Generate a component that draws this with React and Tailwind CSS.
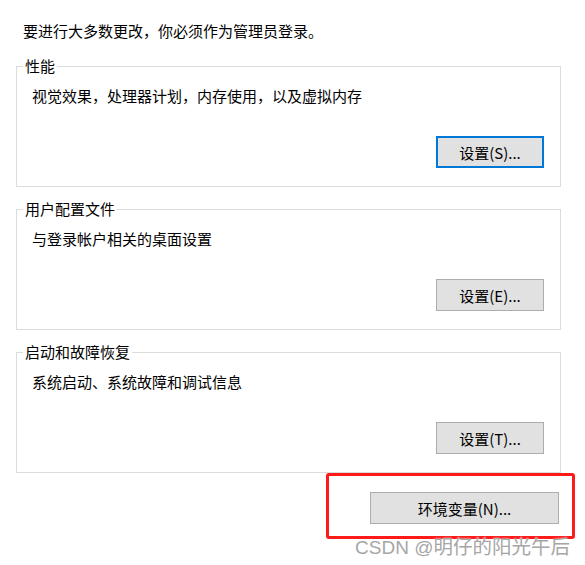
const groups = [
  { title: '性能', desc: '视觉效果，处理器计划，内存使用，以及虚拟内存', btn: '设置(S)...', focused: true },
  { title: '用户配置文件', desc: '与登录帐户相关的桌面设置', btn: '设置(E)...' },
  { title: '启动和故障恢复', desc: '系统启动、系统故障和调试信息', btn: '设置(T)...' },
]

function GroupBox({ title, desc, btn, focused }) {
  return (
    <fieldset className="border border-[#dcdcdc] px-0">
      <legend className="ml-[6px] px-[2px] leading-[20px]">{title}</legend>
      <div className="pl-[15px] pr-[16px] pb-[18px]">
        <p className="mt-[10px] leading-[20px]">{desc}</p>
        <div className="flex justify-end mt-[30px]">
          <button
            className={`w-[108px] h-[32px] bg-[#e1e1e1] leading-none ${
              focused ? 'border-2 border-[#0078d7]' : 'border border-[#adadad]'
            }`}
          >
            {btn}
          </button>
        </div>
      </div>
    </fieldset>
  )
}

export default function App() {
  return (
    <div
      className="relative w-[585px] h-[565px] bg-white text-[15px] text-black overflow-hidden"
      style={{ fontFamily: '"Noto Sans CJK SC", "Noto Sans", sans-serif' }}
    >
      <div className="pt-[21px] pl-[23px] leading-[20px]">要进行大多数更改，你必须作为管理员登录。</div>

      <div className="mt-[15px] ml-[16px] w-[545px] flex flex-col gap-[12px]">
        {groups.map(g => (
          <GroupBox key={g.title} {...g} />
        ))}
      </div>

      {/* red annotation box */}
      <div className="ml-[326px] w-[249px] h-[66px] border-[3px] border-[#ff1a1a] rounded-[3px] flex items-start pt-[16px] pl-[41px]">
        <button className="w-[189px] h-[32px] bg-[#e1e1e1] border border-[#adadad] leading-none">
          环境变量(N)...
        </button>
      </div>

      {/* watermark */}
      <div
        className="absolute right-[15px] top-[535px] leading-[22px] text-[#a6a6a6] whitespace-nowrap flex items-baseline"
        style={{ textShadow: '0 0 2px #ffffff' }}
      >
        <span className="text-[19px]" style={{ fontFamily: '"Liberation Sans", sans-serif' }}>CSDN @</span>
        <span className="text-[19.5px]" style={{ fontFamily: '"Noto Sans CJK SC", sans-serif' }}>明仔的阳光午后</span>
      </div>
    </div>
  )
}
